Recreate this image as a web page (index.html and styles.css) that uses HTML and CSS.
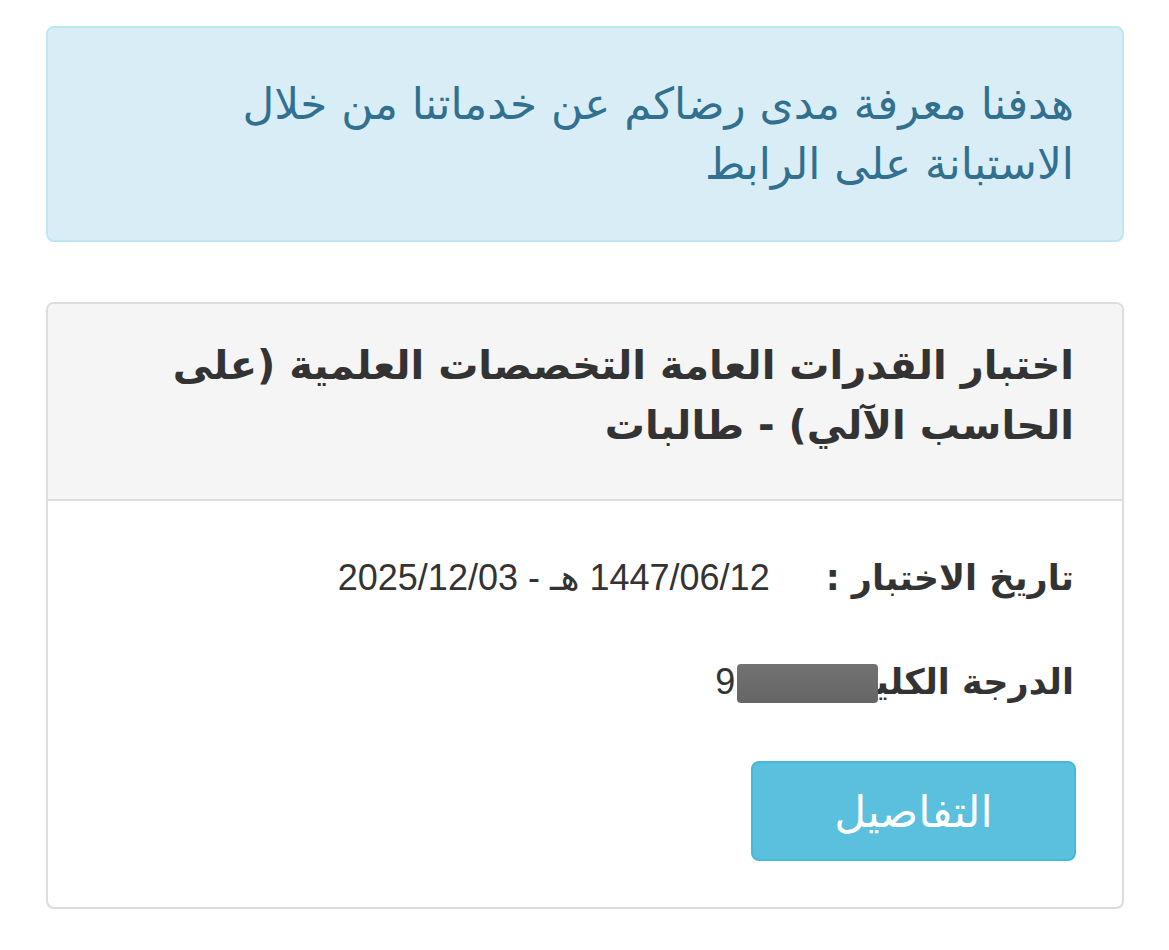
FILE: index.html
```html
<!DOCTYPE html>
<html lang="ar" dir="rtl">
<head>
<meta charset="utf-8">
<link rel="stylesheet" href="styles.css">
</head>
<body>
<div class="page">
  <div class="alert">هدفنا معرفة مدى رضاكم عن خدماتنا من خلال الاستبانة على الرابط</div>
  <div class="card">
    <div class="card-head">اختبار القدرات العامة التخصصات العلمية (على الحاسب الآلي) - طالبات</div>
    <div class="card-body">
      <div class="row"><span class="label">تاريخ الاختبار :</span><span class="value">1447/06/12 هـ - 2025/12/03</span></div>
      <div class="row row-score"><span class="label">الدرجة الكلية :</span><span class="value score">9<span class="redact"></span></span></div>
      <div class="actions"><button class="btn">التفاصيل</button></div>
    </div>
  </div>
</div>
</body>
</html>
```
FILE: styles.css
```css
html, body { margin: 0; padding: 0; background: #fff; }
body { font-family: "DejaVu Sans", sans-serif; }
.page { padding: 26px 45px 0 46px; display: flex; flex-direction: column; gap: 60px; }
.alert {
  background: #d9edf7; border: 2px solid #bce8f1; border-radius: 8px;
  color: #31708f; font-size: 43.7px; line-height: 60px;
  padding: 46px 48px 46px 150px; height: 120px;
}
.card { border: 2px solid #dddddd; border-radius: 8px; overflow: hidden; box-shadow: 0 1px 2px rgba(0,0,0,0.06); }
.card-head {
  background: #f5f5f5; border-bottom: 2px solid #dddddd; color: #333;
  font-weight: bold; font-size: 40px; line-height: 60px; padding: 31px 48px 44px 40px;
}
.card-body { padding: 55px 46px 46px 48px; display: flex; flex-direction: column; }
.row { display: flex; align-items: center; gap: 56px; color: #333; height: 44px; line-height: 44px; margin-bottom: 60px; padding-right: 2px; }
.row-score { gap: 93px; margin-bottom: 57px; }
.label { font-weight: bold; font-size: 35px; }
.value { font-family: "Liberation Sans", "DejaVu Sans", sans-serif; font-size: 36px; direction: rtl; }
.score { position: relative; }
.redact {
  position: absolute; right: -143px; top: 4px; width: 141px; height: 39px;
  background: linear-gradient(#727272, #656565); border-radius: 4px;
}
.actions { display: flex; }
.btn {
  background: #5bc0de; border: 2px solid #46b8da; border-radius: 8px; color: #fff;
  font-family: "DejaVu Sans", sans-serif; font-size: 44px; width: 325px; height: 100px; padding: 0;
}
```
